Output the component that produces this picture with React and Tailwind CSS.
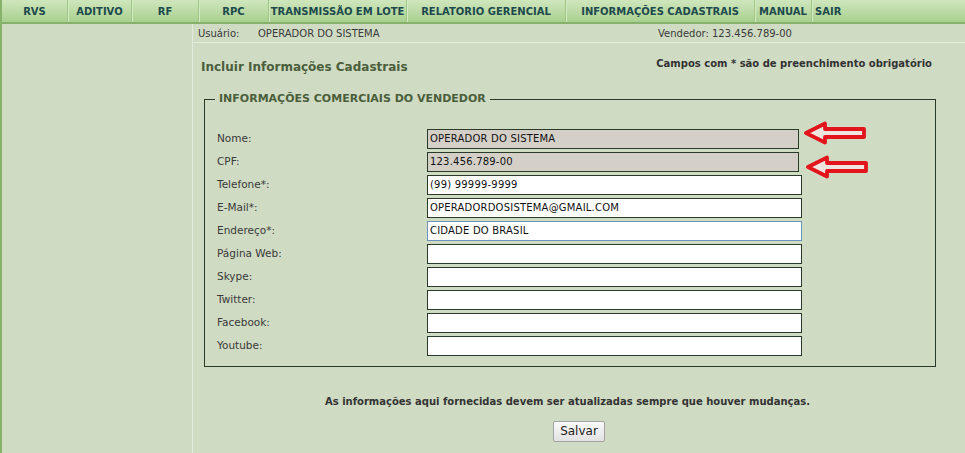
const menu = [
  { label: 'RVS', w: 'w-[66px]' },
  { label: 'ADITIVO', w: 'w-[64px]' },
  { label: 'RF', w: 'w-[67px]' },
  { label: 'RPC', w: 'w-[70px]' },
  { label: 'TRANSMISSÃO EM LOTE', w: 'w-[138px]' },
  { label: 'RELATORIO GERENCIAL', w: 'w-[159px]' },
  { label: 'INFORMAÇÕES CADASTRAIS', w: 'w-[189px]' },
  { label: 'MANUAL', w: 'w-[57px]' },
];

const fields = [
  { label: 'Nome:', value: 'OPERADOR DO SISTEMA', disabled: true },
  { label: 'CPF:', value: '123.456.789-00', disabled: true },
  { label: 'Telefone*:', value: '(99) 99999-9999' },
  { label: 'E-Mail*:', value: 'OPERADORDOSISTEMA@GMAIL.COM' },
  { label: 'Endereço*:', value: 'CIDADE DO BRASIL', focus: true },
  { label: 'Página Web:', value: '' },
  { label: 'Skype:', value: '' },
  { label: 'Twitter:', value: '' },
  { label: 'Facebook:', value: '' },
  { label: 'Youtube:', value: '' },
];

function Arrow({ className }) {
  return (
    <svg className={className} width="64" height="24" viewBox="0 0 64 24">
      <polygon
        points="3,12 22,2.5 22,8 61,8 61,16 22,16 22,21.5"
        fill="#efe6e0"
        stroke="#e2141c"
        strokeWidth="3.8"
        strokeLinejoin="round"
      />
    </svg>
  );
}

export default function App() {
  return (
    <div className="w-[965px] h-[453px] overflow-hidden bg-[#cfdbc3] border-l-2 border-[#86b26a] font-['DejaVu_Sans',Verdana,sans-serif] text-[#333]">
      <div className="flex h-[24px] bg-gradient-to-b from-[#cfe6bd] to-[#a9d08f] border-b-2 border-[#86b06c] text-[10px] font-bold text-[#1d4a4c]">
        {menu.map((m) => (
          <div
            key={m.label}
            className={`${m.w} flex items-center justify-center border-r border-[#9ec686] shadow-[1px_0_0_#d4eac4]`}
          >
            {m.label}
          </div>
        ))}
        <div className="flex items-center pl-[3px]">SAIR</div>
      </div>

      <div className="flex h-[429px]">
        <div className="w-[191px] border-r border-[#e3ebda] shrink-0" />
        <div className="flex-1 relative">
          <div className="flex items-center h-[19px] border-b border-[#e3ebda] text-[10px] text-[#3a3a3a]">
            <span className="pl-[5px] w-[65px]">Usuário:</span>
            <span className="w-[400px]">OPERADOR DO SISTEMA</span>
            <span>Vendedor: 123.456.789-00</span>
          </div>

          <div className="w-[746px]">
            <div className="flex justify-between items-start pl-[8px] pt-[13px]">
              <h1 className="text-[12px] font-bold text-[#4b5e3c] mt-[2px]">Incluir Informações Cadastrais</h1>
              <p className="text-[10px] font-bold text-[#333] pr-[7px]">Campos com * são de preenchimento obrigatório</p>
            </div>

            <fieldset className="relative ml-[11px] mt-[15px] w-[732px] border border-[#2a3a28] pt-[21px] pb-[10px]">
              <legend className="ml-[10px] px-[4px] text-[11px] font-bold text-[#4b5e3c]">
                INFORMAÇÕES COMERCIAIS DO VENDEDOR
              </legend>
              <div className="flex flex-col gap-[3px]">
                {fields.map((f) => (
                  <div key={f.label} className="flex items-center h-[20px]">
                    <label className="w-[222px] pl-[12px] text-[10.5px] text-[#3a3a3a]">{f.label}</label>
                    <input
                      readOnly
                      value={f.value}
                      className={`h-[20px] px-[2px] text-[10px] tracking-[0.2px] text-[#111] font-['DejaVu_Sans',Verdana,sans-serif] outline-none border ${
                        f.disabled
                          ? 'w-[372px] bg-[#d4d0c8] border-[#2a3a28]'
                          : f.focus
                          ? 'w-[375px] bg-white border-[#6f93b8]'
                          : 'w-[375px] bg-white border-[#2a3a28]'
                      }`}
                    />
                  </div>
                ))}
              </div>
              <Arrow className="absolute left-[598px] top-[13px]" />
              <Arrow className="absolute left-[600px] top-[47px]" />
            </fieldset>

            <p className="text-center text-[10px] font-bold text-[#333] mt-[27px] pl-[3px]">
              As informações aqui fornecidas devem ser atualizadas sempre que houver mudanças.
            </p>
            <div className="flex justify-center mt-[12px] pl-[26px]">
              <button className="h-[21px] px-[6px] text-[12px] text-[#222] bg-gradient-to-b from-[#fafafa] to-[#e2e2e2] border border-[#a3a3a3] rounded-[2px] font-['DejaVu_Sans',Verdana,sans-serif]">
                Salvar
              </button>
            </div>
          </div>
        </div>
      </div>
    </div>
  );
}
